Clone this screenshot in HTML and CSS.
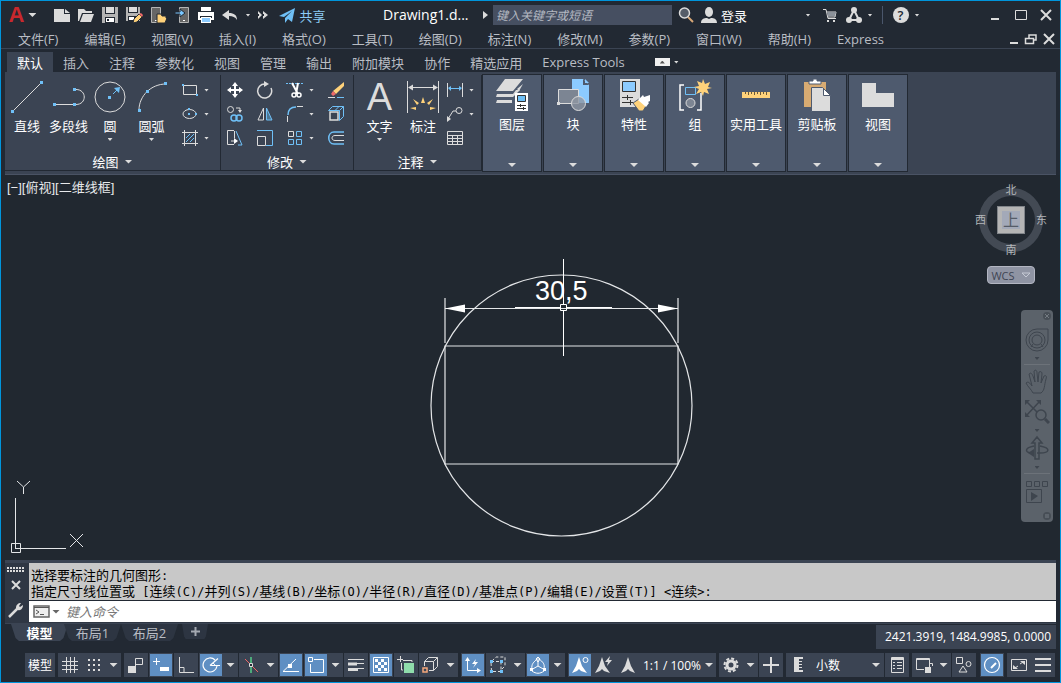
FILE: index.html
```html
<!DOCTYPE html>
<html lang="zh-CN">
<head>
    <meta charset="UTF-8">
    <meta name="viewport" content="width=device-width, initial-scale=1.0">
    <title>Drawing1.dwg</title>
    <link rel="stylesheet" href="styles.css">
</head>
<body>
<div class="window">
    <header class="titlebar">
        <button class="app-menu" aria-label="应用程序菜单"><span class="logo">A</span><i class="caret"></i></button>
        <div class="quick-access">
            <button aria-label="新建"><svg width="18" height="18"><path fill="#dcdcdc" d="M1 3h10v5h6v8H1z"/><path fill="#dcdcdc" d="M12 3l5 4h-5z"/></svg></button>
            <button aria-label="打开"><svg width="18" height="18"><path fill="#dcdcdc" d="M1 3h6l2 2h6v2H5l-3 8H1z"/><path fill="#dcdcdc" d="M6 8h11l-3 8H3z"/></svg></button>
            <button aria-label="保存"><svg width="18" height="18"><path fill="#b4b4b4" d="M1 1h16v16H1z"/><path fill="#222933" d="M4 1h1v6h8V1h1v7H4zM4 11h10v6H4z"/><path fill="#dcdcdc" d="M5 1h8v6H5z"/><path fill="#fff" d="M5 12h8v4H5z"/><path fill="#222933" d="M6 13h2v2H6z"/></svg></button>
            <button aria-label="另存为"><svg width="18" height="18"><path fill="#b4b4b4" d="M1 1h14v14H1z"/><path fill="#222933" d="M3 1h10v6H3zM3 10h10v5H3z"/><path fill="#dcdcdc" d="M4 1h8v5H4z"/><path fill="#fff" d="M4 11h5v3H4z"/><path fill="#ffd27a" stroke="#222933" d="M8 17l1-4 5-5 3 3-5 5z"/><path fill="#ef6a6a" d="M14 8l3 3 1-2-2-2z"/></svg></button>
            <button aria-label="从移动设备打开"><svg width="18" height="18"><path fill="#666" stroke="#b4b4b4" d="M2.500 1.500h9v15h-9z"/><path fill="#fff" d="M6 14h2v1H6z"/><path fill="#ffd27a" stroke="#222933" d="M8 8h4l1 2h4v2h1l-2 5H8z"/></svg></button>
            <button aria-label="保存到移动设备"><svg width="18" height="18"><path fill="#666" stroke="#b4b4b4" d="M6.500 1.500h9v15h-9z"/><path fill="#fff" d="M10 14h2v1h-2z"/><path fill="#7ac7ff" stroke="#222933" d="M2 6h5V3l5 4-5 4V8H2z"/></svg></button>
            <button aria-label="打印"><svg width="18" height="18"><path fill="#fff" d="M4 1h10v4H4zM1 6h16v8H1z"/><path fill="#222933" d="M3 10h12v2H3z"/><path fill="#fff" d="M4 11h10v6H4z"/><path fill="#8ccbff" d="M5 12h8v4H5z"/></svg></button>
            <button aria-label="放弃"><svg width="18" height="18"><path fill="#dcdcdc" d="M1 9l7-5v3c5 0 8 2 8 7-2-3-4-4-8-4v4z"/></svg></button>
            <button class="slim" aria-label="放弃列表"><i class="caret small"></i></button>
            <button class="slim more" aria-label="更多"><svg width="10" height="10"><path fill="#dcdcdc" d="M0 1l4 4-4 4V6h1V4H0zM5 1l5 4-5 4V6h1V4H5z"/></svg></button>
            <button class="share"><svg width="18" height="18"><path fill="#6fc0f7" d="M1 10L17 2l-3 14-4-3-3 4v-5l7-7-8 6z"/></svg>共享</button>
        </div>
        <span class="doc-title">Drawing1.d...</span>
        <i class="tri-right"></i>
        <input class="search" type="text" placeholder="键入关键字或短语" aria-label="搜索">
        <div class="account">
            <button aria-label="搜索"><svg width="18" height="18"><path stroke="#d8a878" stroke-width="2" d="M11 11l5 5"/><circle cx="7.500" cy="7" r="5" fill="#555d69" stroke="#dcdcdc" stroke-width="1.500"/></svg></button>
            <button class="login"><svg width="18" height="18"><ellipse cx="9" cy="6" rx="4" ry="5" fill="#dcdcdc"/><path fill="#dcdcdc" d="M1 17c0-4 3-5 6-5l2 1 2-1c3 0 6 1 6 5z"/></svg>登录</button>
        </div>
        <div class="services">
            <button class="slim" aria-label="登录选项"><i class="caret small"></i></button>
            <button class="cart" aria-label="商店"><svg width="16" height="16"><path fill="none" stroke="#dcdcdc" d="M1 2.500h3l2 9h8M5 5h9l-1 5H6"/><path fill="#8b919a" d="M5 5h9l-1 4H6z"/><path fill="#dcdcdc" d="M5 13h2v2H5zM11 13h2v2h-2z"/></svg></button>
            <button class="apps" aria-label="应用"><svg width="18" height="18"><path fill="none" stroke="#dcdcdc" stroke-width="2" d="M9 4L4 14h10z"/><g fill="#dcdcdc"><circle cx="9" cy="4" r="3"/><circle cx="4" cy="14" r="3"/><circle cx="14" cy="14" r="3"/></g><path fill="#222933" d="M9 9l2 3H7z"/></svg></button>
            <button class="apps-drop" aria-label="应用列表"><i class="caret small"></i></button>
            <span class="divider"></span>
            <button class="help" aria-label="帮助"><span class="help-mark">?</span><i class="caret small"></i></button>
        </div>
        <div class="win-buttons">
            <button aria-label="最小化"><svg width="14" height="14"><path fill="#dcdcdc" d="M2 10h8v2H2z"/></svg></button>
            <button aria-label="最大化"><svg width="14" height="14"><path fill="none" stroke="#dcdcdc" d="M1.500 2.500h11v9h-11z"/></svg></button>
            <button aria-label="关闭"><svg width="14" height="14"><path stroke="#dcdcdc" stroke-width="2" d="M2 2l10 10M12 2L2 12"/></svg></button>
        </div>
    </header>

    <nav class="menubar">
        <button>文件(F)</button>
        <button>编辑(E)</button>
        <button>视图(V)</button>
        <button>插入(I)</button>
        <button>格式(O)</button>
        <button>工具(T)</button>
        <button>绘图(D)</button>
        <button>标注(N)</button>
        <button>修改(M)</button>
        <button>参数(P)</button>
        <button>窗口(W)</button>
        <button>帮助(H)</button>
        <button>Express</button>
        <div class="doc-buttons">
            <button aria-label="最小化图形"><svg width="12" height="14"><path fill="#dcdcdc" d="M2 10h8v2H2z"/></svg></button>
            <button aria-label="还原图形"><svg width="14" height="14"><path fill="none" stroke="#dcdcdc" stroke-width="1.500" d="M5 6V3h7v5h-3M1.500 6.500h8v5h-8z"/></svg></button>
            <button aria-label="关闭图形"><svg width="14" height="14"><path stroke="#dcdcdc" stroke-width="2" d="M2 2l10 10M12 2L2 12"/></svg></button>
        </div>
    </nav>

    <nav class="tabs">
        <button class="active">默认</button>
        <button>插入</button>
        <button>注释</button>
        <button>参数化</button>
        <button>视图</button>
        <button>管理</button>
        <button>输出</button>
        <button>附加模块</button>
        <button>协作</button>
        <button>精选应用</button>
        <button>Express Tools</button>
        <button class="minimize" aria-label="最小化功能区"><span class="mini-box"><i></i></span><i class="caret small"></i></button>
    </nav>

    <section class="ribbon">
        <div class="panel panel-draw">
            <div class="tools">
                <button class="big"><svg width="34" height="34"><path stroke="#dcdcdc" d="M3 31L31 3"/><path fill="#6fc0f7" d="M1 30h3v3H1zM30 1h3v3h-3z"/></svg>直线</button>
                <button class="big wide"><svg width="34" height="34"><path fill="none" stroke="#dcdcdc" d="M4 24.500h18M24 9.500c11 0 11 15 0 15"/><path fill="#6fc0f7" d="M1 23h3v3H1zM21 23h3v3h-3zM21 8h3v3h-3z"/></svg>多段线</button>
                <button class="big"><svg width="34" height="34"><circle cx="17" cy="17" r="15" fill="none" stroke="#dcdcdc"/><path fill="#6fc0f7" d="M15 16h3v3h-3zM21 8l6-1-1 6z"/><path stroke="#6fc0f7" d="M20 14l4-4"/></svg>圆<i class="caret small"></i></button>
                <button class="big wide"><svg width="34" height="34"><path fill="none" stroke="#dcdcdc" d="M4 30C4 16 16 4 31 4"/><path fill="#6fc0f7" d="M3 29h3v3H3zM11 10h3v3h-3zM29 2h3v3h-3z"/></svg>圆弧<i class="caret small"></i></button>
                <div class="stack">
                    <button aria-label="矩形"><svg width="18" height="18"><path fill="none" stroke="#dcdcdc" d="M2.500 4.500h13v9h-13z"/><path fill="#6fc0f7" d="M1 3h2v2H1zM15 13h2v2h-2z"/></svg><i class="caret small"></i></button>
                    <button aria-label="椭圆"><svg width="18" height="18"><ellipse cx="8.500" cy="9" rx="6.500" ry="4.500" fill="none" stroke="#dcdcdc"/><path fill="#6fc0f7" d="M7 8h2v2H7zM7 3h2v2H7zM14 8h2v2h-2z"/></svg><i class="caret small"></i></button>
                    <button aria-label="图案填充"><svg width="18" height="18"><path fill="none" stroke="#dcdcdc" d="M3.500 1v16M14.500 1v16M1 3.500h16M1 14.500h16"/><path stroke="#6fc0f7" d="M5 9l4-4M5 13l8-8M9 13l4-4"/></svg><i class="caret small"></i></button>
                </div>
            </div>
            <button class="panel-title">绘图<i class="caret"></i></button>
        </div>

        <div class="panel panel-modify">
            <div class="modify-grid">
                <button aria-label="移动"><svg width="18" height="18"><path fill="#fff" d="M9 1l3 4h-2v3h3V6l4 3-4 3v-2h-3v3h2l-3 4-3-4h2v-3H5v2L1 9l4-3v2h3V5H6z"/></svg></button>
                <button aria-label="旋转"><svg width="18" height="18"><path fill="none" stroke="#dcdcdc" stroke-width="1.500" d="M9 3a7 7 0 1 0 6 4"/><path fill="#dcdcdc" d="M8 0l5 3-5 3z"/></svg></button>
                <button aria-label="修剪"><svg width="18" height="18"><path stroke="#6fc0f7" stroke-dasharray="2 1" d="M0 2.500h18"/><path stroke="#fff" stroke-width="2" d="M6 2l6 11M12 2l-2 11"/><g fill="none" stroke="#fff" stroke-width="1.500"><circle cx="8" cy="14" r="2"/><circle cx="13" cy="14" r="2"/></g></svg><i class="caret small"></i></button>
                <button aria-label="删除"><svg width="18" height="18"><path fill="#ffd27a" d="M17 1v4l-8 8-3-3z"/><path fill="#ef6a6a" d="M6 10l3 3-3 2-2-2z"/><path stroke="#dcdcdc" d="M1 16.500h7"/><path stroke="#6fc0f7" d="M10 16.500h7"/></svg></button>
                <button aria-label="复制"><svg width="18" height="18"><g fill="none" stroke="#dcdcdc"><circle cx="4.500" cy="4.500" r="3"/><path d="M10 3h4v3"/></g><path fill="#dcdcdc" d="M12 5h4l-2 3z"/><g fill="none" stroke="#6fc0f7" stroke-width="1.500"><circle cx="8" cy="13" r="3"/><circle cx="13" cy="13" r="3"/></g></svg></button>
                <button aria-label="镜像"><svg width="18" height="18"><path fill="none" stroke="#dcdcdc" d="M7.500 3v12H2z"/><path fill="#4e7794" stroke="#6fc0f7" d="M10.500 3v12H16z"/></svg></button>
                <button aria-label="圆角"><svg width="18" height="18"><path fill="none" stroke="#6fc0f7" stroke-width="1.500" d="M2 10c0-5 3-8 8-8"/><path stroke="#dcdcdc" d="M11 1.500h6M1.500 11v6"/></svg><i class="caret small"></i></button>
                <button aria-label="分解"><svg width="18" height="18"><path fill="none" stroke="#6fc0f7" d="M1.500 5.500l4-4h11v10l-4 4M1.500 5.500h11M12.500 5.500l4-4M12.500 5.500v10M8.500 5l4-4"/><path fill="#3b4453" stroke="#dcdcdc" stroke-width="1.500" d="M3 7h8v8H3z"/></svg></button>
                <button aria-label="拉伸"><svg width="18" height="18"><path fill="none" stroke="#dcdcdc" d="M8 1.500H1.500v14H8M8.500 2v7M5 12h4"/><path fill="#fff" d="M8 9l4 3-4 3z"/><path stroke="#6fc0f7" d="M10 2l6 14M12 16h4"/></svg></button>
                <button aria-label="缩放"><svg width="18" height="18"><path fill="none" stroke="#6fc0f7" d="M1 1.500h15.500V16.500H10"/><path fill="none" stroke="#dcdcdc" d="M1.500 7.500h8v9h-8z"/></svg></button>
                <button aria-label="阵列"><svg width="18" height="18"><path fill="none" stroke="#dcdcdc" d="M2.500 2.500h5v5h-5z"/><path fill="none" stroke="#6fc0f7" d="M10.500 2.500h5v5h-5zM2.500 10.500h5v5h-5zM10.500 10.500h5v5h-5z"/></svg><i class="caret small"></i></button>
                <button aria-label="偏移"><svg width="18" height="18"><path fill="none" stroke="#6fc0f7" stroke-width="1.500" d="M17 3H7C0 3 0 15 7 15h10"/><path fill="none" stroke="#dcdcdc" d="M17 6.500H8c-4 0-4 5 0 5h9"/></svg></button>
            </div>
            <button class="panel-title">修改<i class="caret"></i></button>
        </div>

        <div class="panel panel-annotate">
            <div class="tools">
                <button class="big wide"><span class="letter">A</span>文字<i class="caret small"></i></button>
                <button class="big"><svg width="34" height="34"><path stroke="#dcdcdc" d="M1.500 1v32M32.500 1v32M3 7.500h28"/><path fill="#dcdcdc" d="M2 7.500l5-3v6zM32 7.500l-5-3v6z"/><g fill="#ffd27a"><path d="M15 23l2-6 2 6zM11 25l-4-6 6 4zM23 25l4-6-6 4zM10 30l-6-2 6-1zM24 30l6-2-6-1z"/></g></svg>标注</button>
                <div class="stack">
                    <button aria-label="线性"><svg width="18" height="18"><path stroke="#dcdcdc" d="M1.500 2v14M16.500 2v14"/><path stroke="#6fc0f7" d="M3 7.500h12"/><path fill="#6fc0f7" d="M2 7l3-2v5zM16 7l-3-2v5z"/></svg><i class="caret small"></i></button>
                    <button aria-label="引线"><svg width="18" height="18"><circle cx="13" cy="5.500" r="3" fill="none" stroke="#dcdcdc"/><path fill="none" stroke="#dcdcdc" d="M10 6H7l-5 8"/><path fill="#dcdcdc" d="M1 17v-6l4 3z"/></svg><i class="caret small"></i></button>
                    <button aria-label="表格"><svg width="18" height="18"><path fill="none" stroke="#dcdcdc" d="M1.500 2.500h15v13h-15zM1 6.500h15M1 9.500h15M1 12.500h15M6.500 6v9M11.500 6v9"/></svg></button>
                </div>
            </div>
            <button class="panel-title">注释<i class="caret"></i></button>
        </div>

        <div class="collapsed-panels">
            <button class="collapsed"><svg width="34" height="34"><g fill="#dcdcdc"><path d="M10 1h18L18 13H1zM2 16h16l3-4h4l-7 7H1z"/><path d="M2 22h15v3H1zM22 11l6-5-4 7z"/></g><path fill="#fff" d="M20 15h13v18H20z"/><path fill="#6fc0f7" stroke="#333" d="M22.500 17.500h8v6h-8z"/><path stroke="#333" d="M22 27.500h9M22 30.500h9M25.500 26v3M28.500 29v3"/></svg>图层<i class="caret"></i></button>
            <button class="collapsed"><svg width="34" height="34"><path fill="#8ccbff" d="M16 1h11l6 6v18H16z"/><path fill="#4e5a6e" d="M27 1v6h6z"/><path fill="#8ccbff" d="M29 1l4 4h-4z"/><path fill="#7c8593" stroke="#dcdcdc" d="M2.500 11.500h20v14h-20z"/><circle cx="22.500" cy="25.500" r="7" fill="#8f96a3" fill-opacity=".8" stroke="#dcdcdc"/><path fill="#dcdcdc" d="M1 24h3v3H1z"/></svg>块<i class="caret"></i></button>
            <button class="collapsed"><svg width="34" height="34"><path fill="#dcdcdc" d="M3 1h20v28H3z"/><path fill="#8ccbff" stroke="#333" d="M5.500 3.500h13v10h-13z"/><path stroke="#333" d="M5 19.500h11M5 24.500h11M10.500 17v5M13.500 22v5"/><path fill="#ffd27a" stroke="#4e5a6e" d="M16 25l6-4 7 7-3 5h-4z"/><path fill="#fff" d="M21 22l5-5 1 2 3-1 3-1v6l-2 1 1 1-3 4z"/></svg>特性<i class="caret"></i></button>
            <button class="collapsed"><svg width="34" height="34"><path fill="none" stroke="#fff" stroke-width="1.500" d="M6 7H2v25h4M19 32h4V15"/><path fill="none" stroke="#6fc0f7" d="M7.500 9.500h10v7h-10z"/><circle cx="12.500" cy="25" r="4.500" fill="#7c8593" stroke="#dcdcdc"/><path fill="#ffd27a" d="M25 1l2 5 5-2-2 5 4 1-5 1 2 5-5-2-1 4-2-4-5 2 3-5-5-2 5-1-2-5 5 2z"/></svg>组<i class="caret"></i></button>
            <button class="collapsed"><svg width="34" height="34"><path fill="#ffd27a" d="M3 14h28v6H3z"/><path stroke="#6b5a3a" d="M6.500 14v2M9.500 14v3M12.500 14v2M15.500 14v3M18.500 14v2M21.500 14v3M24.500 14v2M27.500 14v3"/></svg>实用工具<i class="caret"></i></button>
            <button class="collapsed"><svg width="34" height="34"><path fill="#d8ab72" d="M4 4h22v25H4z"/><path fill="#fff" stroke="#4e5a6e" d="M9 6V3h4V1h4v2h4v3z"/><path fill="#dcdcdc" stroke="#4e5a6e" d="M11.500 9.500h11l8 8v16h-19z"/><path fill="#fff" stroke="#4e5a6e" d="M23.500 10.500v7h7z"/></svg>剪贴板<i class="caret"></i></button>
            <button class="collapsed"><svg width="34" height="34"><path fill="#dcdcdc" d="M1 5h14v10h18v14H1z"/></svg>视图<i class="caret"></i></button>
        </div>
    </section>

    <main class="canvas">
        <span class="view-label">[−][俯视][二维线框]</span>
        <svg class="drawing" width="280" height="290">
            <g fill="none" stroke="#e4e6e8" stroke-width="1.200">
                <circle cx="141.500" cy="155.500" r="130.500"/>
                <path d="M25 96h233v118H25zM25 48v45M258 48v45M25 58.500h233"/>
            </g>
            <path fill="#fff" d="M25 58.500l20-4v8zM258 58.500l-20-4v8z"/>
            <text x="115" y="50" fill="#fff" font-family="Liberation Sans, sans-serif" font-size="27">30,5</text>
            <path fill="none" stroke="#fff" d="M143.500 9v45M143.500 61v45M95 57.500h45M147 57.500h45M140.500 54.500h6v6h-6z"/>
        </svg>

        <svg class="ucs" width="80" height="80">
            <g fill="none" stroke="#e4e6e8">
                <path d="M6.500 20v50M6 70.500h51M2.500 65.500h9v9h-9z"/>
                <path d="M61 56l13 13M74 56L61 69M8 3l6.500 6L21 3M14.500 9v7"/>
            </g>
        </svg>

        <div class="viewcube">
            <span class="dir">北</span>
            <span class="dir">西</span>
            <button class="face">上</button>
            <span class="dir">东</span>
            <span class="dir">南</span>
        </div>
        <button class="wcs">WCS<svg width="10" height="6"><path fill="none" stroke="#c5c9d4" d="M1 1h8L5 5z"/></svg></button>

        <div class="navbar">
            <svg class="dot" width="10" height="10"><circle cx="5" cy="5" r="4" fill="#474e56"/><path stroke="#747b82" d="M3 3l4 4M7 3L3 7"/></svg>
            <button aria-label="导航控制盘"><svg width="24" height="24"><g fill="none" stroke="#3e454e"><path d="M12 1h11v11a11 11 0 1 1-11-11z"/><circle cx="12" cy="12" r="8"/><circle cx="12" cy="12" r="5"/><path d="M8 16l-2 3M16 16l2 3"/></g></svg><i class="caret small"></i></button>
            <hr>
            <button aria-label="平移"><svg width="24" height="26"><path fill="none" stroke="#3e454e" d="M8 24c-2-4-5-6-7-10 2-2 4 0 6 3L4 5c2-2 3 0 4 2l2 6-1-11c2-2 3 0 3 2l1 9 1-10c2-1 3 0 3 2l-1 9 3-7c2-1 3 0 2 3-2 7-1 11-5 14z"/></svg></button>
            <button aria-label="缩放"><svg width="26" height="26"><path stroke="#3e454e" stroke-width="1.500" d="M2 3l15 15M16 3L2 18"/><path fill="#3e454e" d="M1 2h5L1 7zM17 2v5l-5-5zM1 19v-5l5 5z"/><circle cx="17" cy="17" r="5" fill="#5b626a" stroke="#3e454e" stroke-width="1.500"/><path stroke="#3e454e" stroke-width="3" d="M21 21l4 4"/></svg><i class="caret small"></i></button>
            <button aria-label="动态观察"><svg width="24" height="26"><path fill="none" stroke="#3e454e" stroke-width="1.500" d="M10 24V8H7l5-6 5 6h-3v16zM9 11c-10 2-10 7 0 7M15 11c11 2 10 7 0 7h-3"/><path fill="#3e454e" d="M3 18l6-4v8z"/></svg><i class="caret small"></i></button>
            <hr>
            <button aria-label="ShowMotion"><svg width="24" height="26"><path fill="none" stroke="#3e454e" d="M1.500 3.500h5v5h-5zM9.500 3.500h5v5h-5zM17.500 3.500h5v5h-5zM1.500 11.500h15v13h-15z"/><path fill="#3e454e" d="M6 14l7 4-7 5z"/></svg></button>
            <svg class="dot" width="10" height="10"><circle cx="5" cy="5" r="4" fill="#474e56"/><path stroke="#747b82" d="M3 4h4M3 6h4"/></svg>
        </div>
    </main>

    <section class="command">
        <div class="grip">
            <svg width="18" height="6"><path stroke="#dcdcdc" stroke-width="2" stroke-dasharray="2 1" d="M0 1h18M0 4h18"/></svg>
            <button aria-label="关闭命令行"><svg width="12" height="12"><path stroke="#dcdcdc" stroke-width="2" d="M2 2l8 8M10 2l-8 8"/></svg></button>
            <button aria-label="自定义"><svg width="16" height="16"><path stroke="#dcdcdc" stroke-width="2.500" d="M1 15l9-9"/><path fill="#dcdcdc" d="M8 6c0-3 2-5 5-5l-2 3 1 1 3-2c0 3-2 6-5 5z"/></svg></button>
        </div>
        <div class="command-body">
            <div class="history">
                <p>选择要标注的几何图形<span>:</span></p>
                <p>指定尺寸线位置或<span> [</span>连续<span>(C)/</span>并列<span>(S)/</span>基线<span>(B)/</span>坐标<span>(O)/</span>半径<span>(R)/</span>直径<span>(D)/</span>基准点<span>(P)/</span>编辑<span>(E)/</span>设置<span>(T)] &lt;</span>连续<span>&gt;:</span></p>
            </div>
            <div class="prompt">
                <button aria-label="最近使用的命令"><svg width="17" height="13"><path fill="#eee" stroke="#666" stroke-width="1.500" d="M1 1h15v11H1z"/><path fill="none" stroke="#555" d="M1 2.500h15M3 5l3 2-3 2M7 9.500h4"/></svg><i class="caret"></i></button>
                <input type="text" placeholder="键入命令" aria-label="命令">
            </div>
        </div>
    </section>

    <div class="layout-row">
        <nav class="layout-tabs">
            <button class="active">模型</button>
            <button>布局1</button>
            <button>布局2</button>
            <button class="add" aria-label="新建布局"><svg width="9" height="9"><path stroke="#a4a9b1" stroke-width="2" d="M4.500 0v9M0 4.500h9"/></svg></button>
        </nav>
        <span class="coords">2421.3919, 1484.9985, 0.0000</span>
    </div>

    <footer class="statusbar">
        <div class="group">
            <button class="space">模型</button>
        </div>
        <div class="group">
            <div class="unit">
                <button aria-label="栅格"><svg width="18" height="18"><path stroke="#dcdcdc" d="M5.500 1v16M9.500 1v16M13.500 1v16M1 5.500h16M1 9.500h16M1 13.500h16"/></svg></button>
                <button aria-label="捕捉"><svg width="18" height="18"><path stroke="#dcdcdc" stroke-width="2" stroke-dasharray="2 3" d="M3 4h13M3 9h13M3 14h13"/></svg></button>
                <button class="drop" aria-label="捕捉设置"><i class="caret"></i></button>
            </div>
        </div>
        <div class="group">
            <button aria-label="推断约束"><svg width="18" height="18"><path fill="#dcdcdc" d="M1 10h8v7H1z"/><path fill="none" stroke="#dcdcdc" d="M8.500 10V2.500h7v6h-7"/></svg></button>
            <button class="on" aria-label="动态输入"><svg width="18" height="18"><path stroke="#fff" d="M1 5.500h7M4.500 2v7"/><path fill="#fff" d="M8 11h9v4H8z"/></svg></button>
            <button aria-label="正交"><svg width="18" height="18"><path fill="none" stroke="#dcdcdc" d="M2.500 1v15.500H17M2 11.500h5v5"/></svg></button>
            <div class="unit">
                <button class="on" aria-label="极轴追踪"><svg width="18" height="18"><path fill="none" stroke="#fff" stroke-width="1.200" d="M13 4a7 7 0 1 0 2 6M8 9.500h10M8 9.500l8-7"/><path fill="none" stroke="#fff" d="M11 7c2 1 2 3 2 3"/></svg></button>
                <button class="drop" aria-label="极轴设置"><i class="caret"></i></button>
            </div>
            <div class="unit">
                <button aria-label="等轴测草图"><svg width="18" height="18"><path stroke="#e66" d="M3 3l13 13"/><path stroke="#5c8" stroke-width="1.500" d="M9 1v16"/><path fill="#222933" stroke="#dcdcdc" d="M7.500 7.500h3v3h-3z"/></svg></button>
                <button class="drop" aria-label="等轴测设置"><i class="caret"></i></button>
            </div>
            <button class="on" aria-label="对象捕捉追踪"><svg width="18" height="18"><path stroke="#fff" d="M1 15.500h16M1 15.500L14 3"/><path fill="#fff" d="M6 8h4v4H6z"/></svg></button>
            <div class="unit">
                <button class="on" aria-label="对象捕捉"><svg width="18" height="18"><path fill="none" stroke="#fff" d="M7 3.500h9.500v13h-13V8M1.500 1.500h4v4h-4z"/></svg></button>
                <button class="drop" aria-label="捕捉模式"><i class="caret"></i></button>
            </div>
            <button aria-label="线宽"><svg width="18" height="18"><path stroke="#dcdcdc" d="M1 3.500h16M8 7.500h9M8 12.500h9"/><path stroke="#dcdcdc" stroke-width="3" d="M1 8h9M1 13.500h10"/></svg></button>
            <button class="on" aria-label="透明度"><svg width="18" height="18"><path fill="none" stroke="#fff" d="M1.500 1.500h15v15h-15z"/><path stroke="#fff" stroke-width="3" stroke-dasharray="3 3" d="M3 4.500h12M6 7.500h9M3 10.500h12M6 13.500h9"/></svg></button>
            <button aria-label="选择循环"><svg width="18" height="18"><path fill="#8fdcab" d="M7 7h10v10H7z"/><path fill="none" stroke="#dcdcdc" d="M4.500 7v7H6M6 4.500h9V6M0 3.500h6M3.500 0v6"/></svg></button>
            <div class="unit">
                <button aria-label="三维对象捕捉"><svg width="18" height="18"><path fill="none" stroke="#dcdcdc" d="M2.500 10V5.500h9v9H7M2.500 5.500l4-4h9v9l-4 4M11.500 5.500l4-4"/><path fill="none" stroke="#f5a77b" stroke-width="1.500" d="M1 12h4v4H1z"/></svg></button>
                <button class="drop" aria-label="三维捕捉设置"><i class="caret"></i></button>
            </div>
        </div>
        <div class="group">
            <button class="on" aria-label="动态UCS"><svg width="18" height="18"><path fill="none" stroke="#fff" d="M3.500 2v12.500H16"/><path fill="#fff" d="M1 5l2.500-4L6 5zM13 12l4 2.500-4 2.500zM12 3L8 8h3l-2 4 5-6h-3z"/></svg></button>
            <div class="unit">
                <button aria-label="选择过滤"><svg width="18" height="18"><path fill="none" stroke="#dcdcdc" stroke-dasharray="3 2" d="M2 5.500h10v10H2.500zM3 5l4-4h9v9l-4 4"/><path fill="#6fc0f7" d="M1 4h3v3H1zM11 4h3v3h-3zM1 14h3v3H1zM11 14h3v3h-3z"/></svg></button>
                <button class="drop" aria-label="过滤设置"><i class="caret"></i></button>
            </div>
            <div class="unit">
                <button class="on" aria-label="小控件"><svg width="18" height="18"><path fill="none" stroke="#fff" d="M9 2v8l-7 4M9 10l7 4M3 13c-1-5 2-7 5-10M10 3c4 3 6 5 5 10M3 15c4 3 8 3 12 0M9 1l2 2-2 3-2-3z"/><path fill="#fff" d="M1 12h3v3H1zM14 12h3v3h-3z"/></svg></button>
                <button class="drop" aria-label="小控件设置"><i class="caret"></i></button>
            </div>
        </div>
        <div class="group">
            <div class="unit">
                <button class="on" aria-label="注释可见性"><svg width="18" height="18"><path fill="#fff" d="M8 1l3 9 5 7-6-2-2-2-2 2-5 2 4-7z"/><circle cx="14.500" cy="4" r="2.500" fill="none" stroke="#fff"/></svg></button>
                <button aria-label="自动缩放"><svg width="18" height="18"><path fill="#dcdcdc" d="M7 1l3 9 5 7-6-2-2-2-2 2-5 2 4-7zM15 0l-5 6h3l-1 4 5-6h-3z"/></svg></button>
                <button aria-label="注释"><svg width="18" height="18"><path fill="#dcdcdc" d="M9 1l3 9 4 7-5-2-2-2-2 2-5 2 4-7z"/></svg></button>
                <button class="scale">1:1 / 100%<i class="caret"></i></button>
            </div>
        </div>
        <div class="group">
            <div class="unit">
                <button aria-label="切换工作空间"><svg width="18" height="18"><circle cx="9" cy="9" r="4" fill="none" stroke="#dcdcdc" stroke-width="3"/><circle cx="9" cy="9" r="6.500" fill="none" stroke="#dcdcdc" stroke-width="2" stroke-dasharray="3 2"/></svg></button>
                <button class="drop" aria-label="工作空间列表"><i class="caret"></i></button>
            </div>
            <button aria-label="注释监视器"><svg width="18" height="18"><path stroke="#dcdcdc" stroke-width="2" d="M9 1v16M1 9h16"/></svg></button>
        </div>
        <div class="group">
            <button class="units"><svg width="18" height="18"><path fill="#dcdcdc" d="M4 1h9v2H9v2h3v1H9v2h3v1H9v2h3v1H9v2h4v2H4z"/></svg><span>小数</span><i class="caret"></i></button>
            <button aria-label="快捷特性"><svg width="18" height="18"><path fill="none" stroke="#dcdcdc" d="M3.500 1.500h12v15h-12z"/><path stroke="#dcdcdc" stroke-width="2" d="M4 3h11"/><path stroke="#dcdcdc" d="M5 6.500h2M9 6.500h5M5 9.500h2M9 9.500h5M5 12.500h2M9 12.500h5"/></svg></button>
        </div>
        <div class="group">
            <div class="unit">
                <button aria-label="锁定用户界面"><svg width="18" height="18"><path fill="none" stroke="#dcdcdc" d="M9 13.500H1.500v-11h13V8M1 3.500h13"/><path fill="#dcdcdc" d="M10 11h6v6h-6z"/><path fill="none" stroke="#dcdcdc" d="M14.500 11V7.500h3V10"/></svg></button>
                <button class="drop" aria-label="锁定设置"><i class="caret"></i></button>
            </div>
            <button aria-label="隔离对象"><svg width="18" height="18"><g fill="none" stroke="#dcdcdc"><path d="M1.500 1.500h6v6h-6zM8 10l4 6H4z"/><circle cx="13.500" cy="8" r="2.500"/></g></svg></button>
        </div>
        <div class="group">
            <button class="on" aria-label="图形性能"><svg width="18" height="18"><circle cx="9" cy="9" r="7.500" fill="none" stroke="#fff" stroke-width="1.200"/><path stroke="#fff" stroke-width="2" d="M8 12l5-5"/></svg></button>
        </div>
        <div class="group">
            <div class="unit">
                <button aria-label="全屏显示"><svg width="18" height="18"><path fill="none" stroke="#dcdcdc" d="M1.500 3.500h15v11h-15z"/><path stroke="#dcdcdc" d="M10 8l3-2M8 10l-3 2"/><path fill="#dcdcdc" d="M10 5h5v4zM3 9v4h5z"/></svg></button>
                <button aria-label="自定义"><svg width="18" height="18"><path stroke="#dcdcdc" stroke-width="2" d="M1 3h16M1 9h16M1 15h16"/></svg></button>
            </div>
        </div>
    </footer>
</div>
</body>
</html>
```

FILE: styles.css
```css
* {
    box-sizing: border-box;
}
body {
    margin: 0;
    font-family: "Open Sans", "Noto Sans CJK SC", sans-serif;
    font-size: 13px;
    color: #b9bdc4;
    background-color: #222933;
}
button {
    display: flex;
    align-items: center;
    justify-content: center;
    margin: 0;
    padding: 0;
    border: none;
    background: none;
    color: inherit;
    font: inherit;
    white-space: nowrap;
    cursor: pointer;
}
svg {
    display: block;
    flex: none;
}
.window {
    display: flex;
    flex-direction: column;
    height: 100vh;
    border: 1px solid #0095dc;
    overflow: hidden;
}
.caret {
    flex: none;
    width: 8px;
    height: 4px;
    background-color: #dcdcdc;
    clip-path: polygon(0 0, 100% 0, 50% 100%);
}
.caret.small {
    width: 5px;
    height: 3px;
}

/* title bar */
.titlebar {
    display: flex;
    align-items: center;
    height: 28px;
    flex: none;
    padding: 0 7px 0 8px;
}
.app-menu {
    gap: 4px;
    width: 27px;
    margin-right: 14px;
}
.logo {
    color: #c9282d;
    font: bold 22px/26px "Liberation Sans", sans-serif;
}
.quick-access {
    display: flex;
    align-items: center;
}
.quick-access button {
    width: 24px;
    height: 26px;
}
.quick-access .slim {
    width: 12px;
}
.quick-access .more {
    width: 18px;
}
.quick-access .share {
    width: 60px;
    gap: 3px;
    color: #8ccbf5;
}
.doc-title {
    width: 100px;
    margin-left: 51px;
    font-size: 14px;
    line-height: 26px;
    color: #fff;
}
.tri-right {
    width: 5px;
    height: 8px;
    background-color: #dcdcdc;
    clip-path: polygon(0 0, 100% 50%, 0 100%);
}
.search {
    flex: 1;
    height: 20px;
    margin: 0 5px;
    padding: 0 3px;
    border: none;
    background-color: #464f61;
    color: #fff;
    font: italic 12px "Open Sans", "Noto Sans CJK SC", sans-serif;
}
.search::placeholder {
    color: #b4b9c2;
}
.account {
    display: flex;
    gap: 5px;
}
.account .login {
    gap: 3px;
    color: #fff;
}
.services {
    display: flex;
    align-items: center;
    margin-left: 53px;
}
.services button {
    height: 24px;
}
.services .slim {
    width: 16px;
}
.services .cart {
    width: 28px;
}
.services .apps {
    width: 20px;
}
.services .apps-drop {
    width: 12px;
}
.divider {
    width: 1px;
    height: 18px;
    margin: 0 9px 0 6px;
    background-color: #4a566b;
}
.services .help {
    gap: 6px;
    width: 28px;
}
.help-mark {
    flex: none;
    width: 16px;
    border-radius: 50%;
    background-color: #dcdcdc;
    color: #222933;
    font-weight: 600;
    line-height: 16px;
}
.win-buttons {
    display: flex;
    gap: 11px;
    margin-left: 69px;
}

/* menu bar */
.menubar {
    display: flex;
    align-items: center;
    gap: 26px;
    height: 20px;
    flex: none;
    padding: 0 4px 0 17px;
    border-bottom: 1px solid #3b4453;
}
.doc-buttons {
    display: flex;
    gap: 4px;
    margin-left: auto;
}

/* ribbon tabs */
.tabs {
    display: flex;
    align-items: flex-end;
    height: 24px;
    flex: none;
    margin: 0 4px;
    padding-left: 2px;
    border-bottom: 1px solid #3b4453;
}
.tabs button {
    height: 20px;
    padding: 0 10px;
}
.tabs .active {
    background-color: #3b4453;
    color: #fff;
}
.tabs .minimize {
    gap: 4px;
    padding: 0 20px;
}
.mini-box {
    display: flex;
    align-items: center;
    justify-content: center;
    width: 15px;
    height: 8px;
    background-color: #f0f0f0;
}
.mini-box i {
    width: 5px;
    height: 3px;
    background-color: #555;
    clip-path: polygon(50% 0, 100% 100%, 0 100%);
}

/* ribbon */
.ribbon {
    display: flex;
    height: 102px;
    flex: none;
    margin: 0 4px;
    padding: 2px 0 3px;
    background-color: #3b4453;
    border-bottom: 1px solid #4a5364;
}
.panel {
    display: flex;
    flex-direction: column;
    justify-content: space-between;
    flex: none;
    border-right: 1px solid #222933;
    border-bottom: 1px solid #222933;
    color: #fff;
}
.panel-draw {
    width: 216px;
}
.panel-modify {
    width: 133px;
}
.panel-annotate {
    width: 128px;
}
.tools {
    display: flex;
    padding: 5px 0 0 2px;
}
.panel-annotate .tools {
    gap: 2px;
    padding-left: 4px;
}
.big {
    flex-direction: column;
    justify-content: flex-start;
    width: 40px;
    line-height: 24px;
}
.big.wide {
    width: 43px;
}
.letter {
    height: 34px;
    color: #dcdcdc;
    font: 38px/34px "Liberation Sans", sans-serif;
}
.stack {
    display: flex;
    flex-direction: column;
    margin: -2px 0 0 8px;
}
.panel-annotate .stack {
    margin-left: 1px;
}
.stack button,
.modify-grid button {
    justify-content: flex-start;
    gap: 5px;
    height: 24px;
}
.modify-grid {
    display: grid;
    grid-template-columns: 30px 30px 41px 20px;
    padding: 3px 0 0 5px;
}
.panel-title {
    gap: 6px;
    height: 17px;
}
.collapsed-panels {
    display: flex;
    gap: 3px;
    padding-left: 1px;
}
.collapsed {
    flex-direction: column;
    justify-content: flex-start;
    width: 58px;
    padding: 3px 0 4px;
    background-color: #4e5a6e;
    color: #fff;
    line-height: 24px;
    outline: 1px solid #222933;
}
.collapsed .caret {
    margin-top: auto;
}

/* drawing area */
.canvas {
    position: relative;
    flex: 1;
    background-color: #212830;
    overflow: hidden;
}
.view-label {
    position: absolute;
    top: 5px;
    left: 6px;
    font-family: "Liberation Sans", "Noto Sans CJK SC", sans-serif;
    line-height: 16px;
    color: #e8eaec;
}
.drawing {
    position: absolute;
    top: 75px;
    left: 419px;
}
.ucs {
    position: absolute;
    left: 8px;
    bottom: 2px;
}
.viewcube {
    position: absolute;
    top: 11px;
    right: 15px;
    display: grid;
    grid-template-columns: 20px 28px 20px;
    grid-template-rows: 20px 28px 20px;
    place-items: center;
    color: #b4b7ba;
    font-size: 11px;
}
.viewcube::before {
    content: "";
    position: absolute;
    inset: 2px;
    border: 8px solid #434a54;
    border-radius: 50%;
}
.dir {
    position: relative;
    line-height: 12px;
}
.dir:first-child {
    grid-column: 1 / -1;
    align-self: start;
    margin-top: -2px;
}
.dir:nth-child(2) {
    justify-self: start;
    margin-left: -2px;
}
.dir:nth-child(4) {
    justify-self: end;
    margin-right: -2px;
}
.dir:last-child {
    grid-column: 1 / -1;
    align-self: end;
    margin-bottom: -2px;
}
.face {
    width: 28px;
    height: 28px;
    border: 5px solid #b5b5b5;
    outline: 1px solid #81858a;
    outline-offset: -1px;
    background-color: #a3a9b8;
    color: #555c68;
    font-size: 16px;
    line-height: 18px;
}
.wcs {
    position: absolute;
    top: 91px;
    right: 25px;
    gap: 6px;
    width: 48px;
    height: 18px;
    border: 1px solid #b3b6c2;
    border-radius: 4px;
    background-color: #8f94a3;
    color: #3f4553;
    font-size: 11px;
}
.navbar {
    position: absolute;
    top: 135px;
    right: 7px;
    display: flex;
    flex-direction: column;
    align-items: center;
    width: 32px;
    height: 212px;
    border-radius: 4px;
    background-color: #5b626a;
}
.navbar button {
    flex-direction: column;
    gap: 5px;
}
.navbar button + button {
    margin-top: 3px;
}
.navbar .dot {
    align-self: flex-end;
    margin: 1px;
}
.navbar .dot:last-child {
    margin-top: auto;
}
.navbar .dot + button {
    margin-top: 6px;
}
.navbar .caret {
    background-color: #3e454e;
}
.navbar hr {
    width: 26px;
    margin: 4px 0;
    border: none;
    border-top: 1px solid #6c7279;
}

/* command line */
.command {
    display: flex;
    height: 63px;
    flex: none;
    margin: 0 4px;
    padding-bottom: 1px;
    border-top: 3px solid #3b4453;
    background-color: #2f3744;
}
.grip {
    display: flex;
    flex-direction: column;
    align-items: center;
    gap: 6px;
    width: 24px;
    padding: 4px 3px 0 0;
}
.grip button + button {
    margin-top: 5px;
}
.command-body {
    display: flex;
    flex-direction: column;
    flex: 1;
}
.history {
    height: 38px;
    padding: 5px 2px 0;
    background-color: #c8c8c8;
    color: #000;
    border-bottom: 1px solid #222933;
}
.history p {
    margin: 0;
    line-height: 15px;
    white-space: pre;
}
.history span {
    font: 12px/15px "DejaVu Sans Mono", monospace;
}
.prompt {
    display: flex;
    align-items: center;
    flex: 1;
    padding-left: 4px;
    background-color: #fff;
}
.prompt button {
    gap: 2px;
}
.prompt .caret {
    background-color: #666;
}
.prompt input {
    flex: 1;
    height: 20px;
    padding: 0 6px;
    border: none;
    outline: none;
    font: italic 13px/18px "Open Sans", "Noto Sans CJK SC", sans-serif;
}
.prompt input::placeholder {
    color: #777;
}

/* layout tabs and coordinates */
.layout-row {
    display: flex;
    justify-content: space-between;
    height: 30px;
    flex: none;
    margin: 0 4px;
    border-top: 1px solid #3b4453;
}
.layout-tabs {
    display: flex;
    padding-left: 6px;
}
.layout-tabs button {
    width: 57px;
    height: 17px;
    background-color: #2d3542;
    clip-path: polygon(0 0, 100% 0, 92% 82%, 86% 100%, 14% 100%, 8% 82%);
}
.layout-tabs .active {
    margin-right: -4px;
    background-color: #3b4453;
    color: #fff;
    font-weight: bold;
}
.layout-tabs .add {
    width: 26px;
    height: 15px;
    margin-left: 4px;
}
.coords {
    width: 180px;
    height: 24px;
    margin-top: 1px;
    padding-right: 5px;
    background-color: #3b4453;
    color: #fff;
    font-size: 12px;
    line-height: 24px;
    text-align: right;
    white-space: nowrap;
}

/* status bar */
.statusbar {
    display: flex;
    gap: 3px;
    height: 29px;
    flex: none;
    padding: 0 5px 5px 24px;
    color: #fff;
    font-size: 12px;
}
.group {
    display: flex;
    gap: 1px;
}
.group:nth-child(8) {
    flex: 1;
}
.unit {
    display: flex;
    background-color: #3b4453;
}
.statusbar button {
    width: 24px;
    height: 24px;
    background-color: #3b4453;
}
.statusbar .on {
    border: 1px solid #3b4453;
    background-color: #5f8fc3;
}
.statusbar .drop {
    width: 15px;
}
.statusbar .space {
    width: 30px;
}
.statusbar .scale {
    gap: 4px;
    width: 76px;
}
.statusbar .units {
    justify-content: space-between;
    width: 98px;
    padding: 0 4px;
}
.units span {
    margin-right: 24px;
}
```
